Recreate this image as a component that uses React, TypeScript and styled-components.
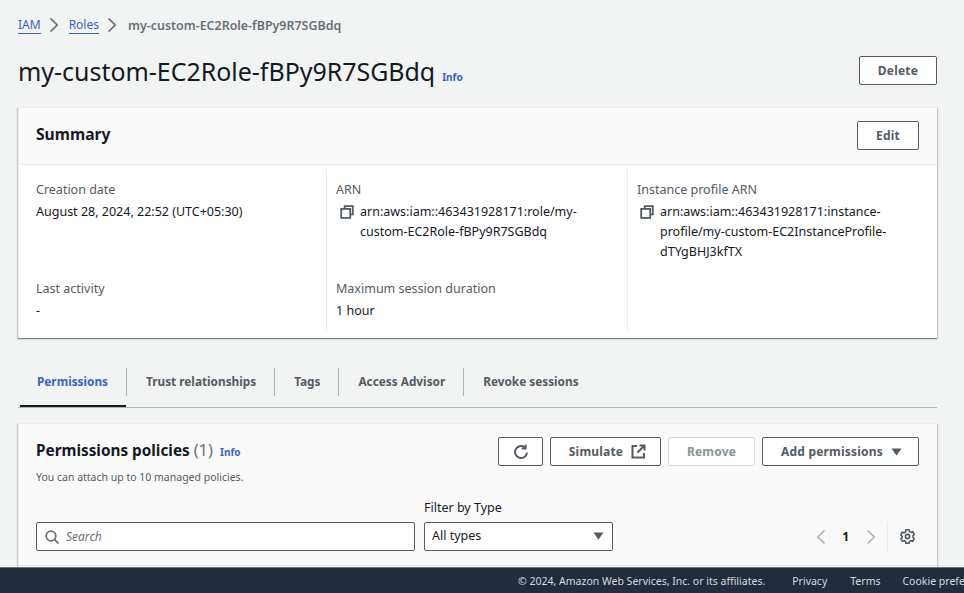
import React from "react";
import styled, { createGlobalStyle } from "styled-components";

const Global = createGlobalStyle`
  html, body { margin: 0; padding: 0; height: 593px; overflow: hidden; background: #f2f3f3; }
  body { font-family: "Noto Sans", sans-serif; font-size: 12.5px; color: #16191f; }
  * { box-sizing: border-box; }
`;

const Page = styled.div`
  width: 964px;
  height: 593px;
  padding: 15px 27px 0 18px;
  overflow: hidden;
  position: relative;
`;
const Crumbs = styled.nav`
  display: flex;
  align-items: center;
  height: 20px;
  gap: 8.5px;
  font-size: 12px;
`;
const CrumbLink = styled.a`
  color: #3b62c4;
  border-bottom: 1px solid #3b62c4;
  line-height: 16px;
`;
const CrumbCurrent = styled.span`
  margin-left: 1px;
  color: #687078;
  font-size: 12.45px;
  font-weight: 600;
`;
const TitleRow = styled.div`
  display: flex;
  align-items: center;
  justify-content: space-between;
  margin-top: 20px;
  height: 31px;
`;
const TitleGroup = styled.div`
  display: flex;
  align-items: baseline;
  gap: 7px;
`;
const Title = styled.h1`
  margin: 0;
  font-size: 24.95px;
  font-weight: 400;
  line-height: 30px;
  color: #16191f;
`;
const Info = styled.a`
  font-size: 10px;
  font-weight: 700;
  color: #3b62c4;
`;
const Button = styled.button<{ $w: number; $disabled?: boolean; $shift?: number }>`
  width: ${(p) => p.$w}px;
  height: 29px;
  flex: none;
  display: inline-flex;
  align-items: center;
  justify-content: center;
  gap: 8px;
  padding: 0 0 0 ${(p) => p.$shift ?? 0}px;
  background: #ffffff;
  border: 1px solid ${(p) => (p.$disabled ? "#d5dbdb" : "#545b64")};
  border-radius: 2px;
  font-family: inherit;
  font-size: 12px;
  font-weight: 700;
  letter-spacing: 0.2px;
  color: ${(p) => (p.$disabled ? "#879596" : "#545b64")};
`;
const Card = styled.section`
  background: #fff;
  border-top: 1px solid #eaeded;
  border-left: 1px solid #eaeded;
  box-shadow: 0 1px 1px 0 rgba(0, 28, 36, 0.3), 1px 1px 1px 0 rgba(0, 28, 36, 0.15), -1px 1px 1px 0 rgba(0, 28, 36, 0.15);
`;
const SummaryCard = styled(Card)`
  margin-top: 21px;
  height: 231px;
  width: 919px;
`;
const CardHeader = styled.header`
  height: 57px;
  padding: 0 18px 2px 17px;
  display: flex;
  align-items: center;
  justify-content: space-between;
  background: #fafafa;
  border-bottom: 1px solid #eaeded;
`;
const CardTitle = styled.h2`
  margin: 0 0 2px;
  font-size: 15.6px;
  font-weight: 700;
  color: #16191f;
`;
const Columns = styled.div`
  display: grid;
  grid-template-columns: 307px 301px 1fr;
  height: 161px;
  margin-top: 4px;
`;
const Column = styled.div<{ $first?: boolean }>`
  display: flex;
  flex-direction: column;
  padding: 11px 10px 0 ${(p) => (p.$first ? 17 : 9)}px;
  border-left: ${(p) => (p.$first ? "none" : "1px solid #eaeded")};
`;
const Field = styled.div<{ $h?: number }>`
  height: ${(p) => p.$h ?? 99}px;
`;
const Label = styled.div`
  line-height: 20px;
  color: #545b64;
`;
const Value = styled.div`
  line-height: 20px;
  margin-top: 2px;
  color: #16191f;
`;
const CopyValue = styled.div<{ $pad: number }>`
  display: flex;
  margin-top: 2px;
  padding-left: ${(p) => p.$pad}px;
  gap: 6px;
  line-height: 20px;
  color: #16191f;
  svg { flex: none; margin-top: 3px; }
`;
const Tabs = styled.div`
  margin-top: 17px;
  height: 53px;
  width: 919px;
  display: flex;
  padding: 0 0 0 2px;
  border-bottom: 1px solid #aab7b8;
`;
const Tab = styled.div<{ $active?: boolean; $last?: boolean }>`
  position: relative;
  display: flex;
  align-items: flex-start;
  padding: 17px 18px 0 ${(p) => (p.$active ? 17 : 20)}px;
  font-size: 11.8px;
  font-weight: 700;
  line-height: 18px;
  height: 52px;
  color: ${(p) => (p.$active ? "#3b62c4" : "#545b64")};
  border-bottom: 2px solid ${(p) => (p.$active ? "#16191f" : "transparent")};
  &::after {
    content: "";
    display: ${(p) => (p.$last ? "none" : "block")};
    position: absolute;
    right: -1px;
    top: 13px;
    height: 28px;
    width: 1px;
    background: #aab7b8;
  }
`;
const PolicyCard = styled(Card)`
  margin-top: 15px;
  width: 919px;
  height: 200px;
  background: #fafafa;
`;
const PolicyHead = styled.div`
  display: flex;
  justify-content: space-between;
  padding: 13px 18px 0 17px;
`;
const PolicyTitle = styled.div`
  display: flex;
  align-items: baseline;
  gap: 7px;
  line-height: 26px;
`;
const PolicyName = styled.h2`
  margin: 0;
  font-size: 15.3px;
  font-weight: 700;
  color: #16191f;
`;
const Count = styled.span`
  font-size: 16.5px;
  font-weight: 400;
  color: #687078;
`;
const Hint = styled.div`
  font-size: 10.5px;
  line-height: 14px;
  margin-top: 5px;
  color: #545b64;
`;
const Actions = styled.div`
  display: flex;
  gap: 7px;
`;
const Filters = styled.div`
  display: flex;
  align-items: flex-end;
  padding: 0 18px 14px 17px;
  margin-top: 16px;
  border-bottom: 1px solid #eaeded;
`;
const SearchBox = styled.div`
  width: 379px;
  height: 29px;
  flex: none;
  display: flex;
  align-items: center;
  gap: 7px;
  padding-left: 8px;
  background: #fff;
  border: 1px solid #545b64;
  border-radius: 2px;
  font-size: 12px;
  font-style: italic;
  color: #687078;
`;
const FilterGroup = styled.div`
  margin-left: 9px;
  width: 189px;
  flex: none;
`;
const FilterLabel = styled.div`
  line-height: 16px;
  margin-bottom: 6px;
  color: #16191f;
`;
const SelectBox = styled.div`
  height: 29px;
  display: flex;
  align-items: center;
  justify-content: space-between;
  padding: 0 8px 2px 7px;
  background: #fff;
  border: 1px solid #545b64;
  border-radius: 2px;
  color: #16191f;
`;
const Pager = styled.div`
  margin-left: auto;
  height: 29px;
  display: flex;
  align-items: center;
  margin-right: 4px;
`;
const PageNumber = styled.span`
  font-size: 12px;
  font-weight: 700;
  color: #16191f;
  margin: 0 17px 0 16px;
`;
const PagerDivider = styled.div`
  width: 1px;
  height: 29px;
  background: #eaeded;
  margin: 0 12px 0 10px;
`;
const Footer = styled.footer`
  position: absolute;
  left: 0;
  right: 0;
  bottom: 0;
  height: 26px;
  background: #232b3e;
  border-top: 1px solid #687078;
  display: flex;
  align-items: center;
  padding-left: 518px;
  font-size: 10.5px;
  color: #d5dbdb;
  white-space: nowrap;
  overflow: hidden;
`;
const FooterLink = styled.span<{ $ml: number }>`
  margin-left: ${(p) => p.$ml}px;
`;

const ChevronRight = ({ c = "#687078" }: { c?: string }) => (
  <svg width="11" height="14" viewBox="0 0 11 14" fill="none" stroke={c} strokeWidth="1.7">
    <path d="M1.5 .5 8.2 7 1.5 13.5" />
  </svg>
);
const ChevronLeft = () => (
  <svg width="11" height="14" viewBox="0 0 11 14" fill="none" stroke="#aab7b8" strokeWidth="1.7">
    <path d="M9.5 .5 2.8 7 9.5 13.5" />
  </svg>
);
const Copy = () => (
  <svg width="14" height="14" viewBox="0 0 14 14" fill="none" stroke="#545b64" strokeWidth="1.8">
    <path d="M4.7 3.5V1.2h8.1v8.1h-2.3" />
    <rect x="1.2" y="3.9" width="9" height="9" />
  </svg>
);
const Caret = () => (
  <svg width="11" height="8" viewBox="0 0 11 8" fill="#545b64">
    <path d="M.5.5h10L5.5 7.5z" />
  </svg>
);
const Refresh = () => (
  <svg width="16" height="16" viewBox="0 0 16 16" fill="none" stroke="#545b64" strokeWidth="2">
    <path d="M14 8.6A6 6 0 1 1 11.6 3.2" />
    <path d="M12.6 .6v3.8H8.8" />
  </svg>
);
const External = () => (
  <svg width="15" height="15" viewBox="0 0 15 15" fill="none" stroke="#545b64" strokeWidth="2">
    <path d="M6 2H1.5v11.5H13V9" />
    <path d="M8.5 1.5h5v5M13.5 1.5 6.5 8.5" />
  </svg>
);
const SearchIcon = () => (
  <svg width="14" height="14" viewBox="0 0 14 14" fill="none" stroke="#687078" strokeWidth="1.8">
    <circle cx="6" cy="6" r="4.8" />
    <path d="m9.5 9.5 4 4" />
  </svg>
);
const Gear = () => (
  <svg width="15" height="15" viewBox="0 0 16 16" fill="none" stroke="#545b64" strokeWidth="1.8">
    <circle cx="8" cy="8" r="2.2" />
    <path d="M6.3 1.2h3.4l.5 2 1.7 1 2-.6 1.6 3-1.4 1.4v1.9l1.4 1.4-1.6 2.8-2-.6-1.7 1-.5 2H6.3l-.5-2-1.7-1-2 .6L.5 11.8 1.9 10.4V8.5L.5 7.1l1.6-3 2 .6 1.7-1z" transform="translate(.4 -.4) scale(.95)" />
  </svg>
);

export default function App() {
  return (
    <>
      <Global />
      <Page>
        <Crumbs>
          <CrumbLink>IAM</CrumbLink>
          <ChevronRight />
          <CrumbLink>Roles</CrumbLink>
          <ChevronRight />
          <CrumbCurrent>my-custom-EC2Role-fBPy9R7SGBdq</CrumbCurrent>
        </Crumbs>
        <TitleRow>
          <TitleGroup>
            <Title>my-custom-EC2Role-fBPy9R7SGBdq</Title>
            <Info>Info</Info>
          </TitleGroup>
          <Button $w={78}>Delete</Button>
        </TitleRow>
        <SummaryCard>
          <CardHeader>
            <CardTitle>Summary</CardTitle>
            <Button $w={62}>Edit</Button>
          </CardHeader>
          <Columns>
            <Column $first>
              <Field>
                <Label>Creation date</Label>
                <Value>August 28, 2024, 22:52 (UTC+05:30)</Value>
              </Field>
              <Field $h={50}>
                <Label>Last activity</Label>
                <Value>-</Value>
              </Field>
            </Column>
            <Column>
              <Field>
                <Label>ARN</Label>
                <CopyValue $pad={4}>
                  <Copy />
                  <span>arn:aws:iam::463431928171:role/my-custom-EC2Role-fBPy9R7SGBdq</span>
                </CopyValue>
              </Field>
              <Field $h={50}>
                <Label>Maximum session duration</Label>
                <Value>1 hour</Value>
              </Field>
            </Column>
            <Column>
              <Field>
                <Label>Instance profile ARN</Label>
                <CopyValue $pad={3}>
                  <Copy />
                  <span>arn:aws:iam::463431928171:instance-profile/my-custom-EC2InstanceProfile-dTYgBHJ3kfTX</span>
                </CopyValue>
              </Field>
            </Column>
          </Columns>
        </SummaryCard>
        <Tabs>
          <Tab $active>Permissions</Tab>
          <Tab>Trust relationships</Tab>
          <Tab>Tags</Tab>
          <Tab>Access Advisor</Tab>
          <Tab $last>Revoke sessions</Tab>
        </Tabs>
        <PolicyCard>
          <PolicyHead>
            <div>
              <PolicyTitle>
                <PolicyName>
                  Permissions policies <Count>(1)</Count>
                </PolicyName>
                <Info>Info</Info>
              </PolicyTitle>
              <Hint>You can attach up to 10 managed policies.</Hint>
            </div>
            <Actions>
              <Button $w={45}>
                <Refresh />
              </Button>
              <Button $w={111} $shift={4}>
                Simulate <External />
              </Button>
              <Button $w={87} $disabled>
                Remove
              </Button>
              <Button $w={157} $shift={2}>
                Add permissions <Caret />
              </Button>
            </Actions>
          </PolicyHead>
          <Filters>
            <SearchBox>
              <SearchIcon />
              Search
            </SearchBox>
            <FilterGroup>
              <FilterLabel>Filter by Type</FilterLabel>
              <SelectBox>
                All types <Caret />
              </SelectBox>
            </FilterGroup>
            <Pager>
              <ChevronLeft />
              <PageNumber>1</PageNumber>
              <ChevronRight c="#aab7b8" />
              <PagerDivider />
              <Gear />
            </Pager>
          </Filters>
        </PolicyCard>
        <Footer>
          © 2024, Amazon Web Services, Inc. or its affiliates.
          <FooterLink $ml={27}>Privacy</FooterLink>
          <FooterLink $ml={23}>Terms</FooterLink>
          <FooterLink $ml={22}>Cookie preferences</FooterLink>
        </Footer>
      </Page>
    </>
  );
}
